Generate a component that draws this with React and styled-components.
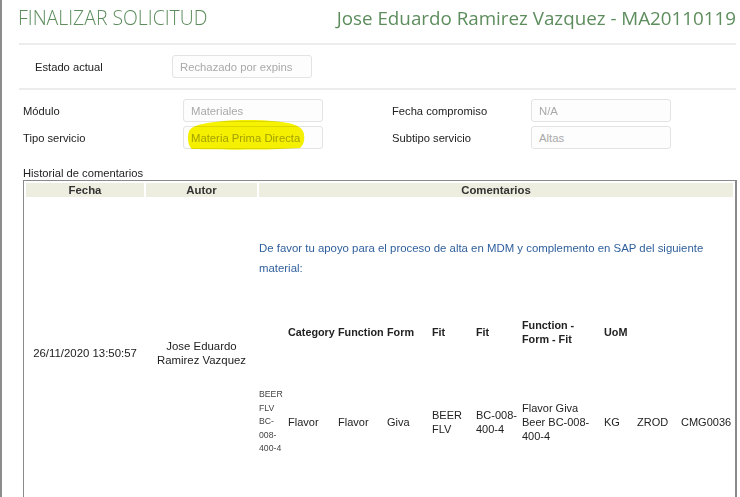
import React from 'react'
import styled, { createGlobalStyle } from 'styled-components'

const GlobalStyle = createGlobalStyle`
    html, body {
        margin : 0;
        padding : 0;
        background : white;
    }
    body {
        border-left : 2px solid #8c8c8c;
        font-family : "Liberation Sans", Arial, sans-serif;
        color : #222;
    }
`;

const Page = styled.div`
    height : 497px;
    overflow : hidden;
    padding : 0 4px 0 15px;
    box-sizing : border-box;
`;

const Header = styled.div`
    display : flex;
    justify-content : space-between;
    align-items : flex-start;
    height : 43px;
    padding-left : 1px;
    box-sizing : border-box;
`;

const Title = styled.h1`
    margin : 5px 0 0;
    font-family : "Open Sans", sans-serif;
    font-weight : ${({light}) => light ? 300 : 400};
    font-size : ${({light}) => light ? '19.4px' : '18.8px'};
    line-height : 26px;
    color : #5d8d5d;
    white-space : nowrap;
`;

const Rule = styled.div`
    border-top : 2px solid #ececec;
    margin-left : 2px;
`;

const StatusRow = styled.div`
    display : flex;
    align-items : center;
    height : 43px;
    padding-left : 18px;
`;

const Label = styled.span`
    font-size : 11.2px;
    color : #222;
    width : ${({w}) => w}px;
    flex-shrink : 0;
`;

const Field = styled.div`
    position : relative;
    width : 140px;
    height : 23px;
    box-sizing : border-box;
    border : 1px solid #e3e3e3;
    border-radius : 3px;
    background : #fdfdfd;
    padding-left : 7px;
    display : flex;
    align-items : center;
    font-size : 11.3px;
    color : #a9a9a9;
`;

const FieldGrid = styled.div`
    display : grid;
    grid-template-columns : 160px 209px 139px 140px;
    grid-auto-rows : 23px;
    row-gap : 4px;
    align-items : center;
    margin-top : 9px;
    padding-left : 6px;
`;

const Highlight = styled.svg`
    position : absolute;
    left : 0;
    top : -8px;
    mix-blend-mode : multiply;
    pointer-events : none;
`;

const SectionTitle = styled.div`
    margin : 17px 0 0 6px;
    font-size : 11.2px;
    line-height : 14px;
    color : #222;
`;

const HistoryTable = styled.table`
    margin-left : 6px;
    width : 714px;
    border-collapse : separate;
    border-spacing : 2px;
    border-top : 1px solid #8a8a8a;
    border-left : 1px solid #8a8a8a;
    border-right : 2px solid #8a8a8a;
    table-layout : fixed;
    font-size : 11.4px;
`;

const HeadCell = styled.th`
    background : #eeeee0;
    height : 14px;
    padding : 0;
    font-size : 11.4px;
    font-weight : bold;
    color : #333;
    text-align : center;
    line-height : 14px;
`;

const BodyCell = styled.td`
    padding : 0;
    vertical-align : ${({top}) => top ? 'top' : 'middle'};
    text-align : ${({center}) => center ? 'center' : 'left'};
    line-height : 14px;
    color : #222;
`;

const CommentText = styled.p`
    margin : 39px 0 0;
    line-height : 20px;
    color : #2f5f9c;
    font-size : 11.4px;
`;

const MaterialTable = styled.table`
    margin : 40px 0 8px;
    border-collapse : collapse;
    table-layout : fixed;
    width : 475px;
`;

const MatHead = styled.th`
    height : 28px;
    padding : 0;
    text-align : left;
    vertical-align : middle;
    font-size : 10.8px;
    font-weight : bold;
    line-height : 14px;
    color : #222;
    white-space : nowrap;
`;

const MatCell = styled.td`
    height : 152px;
    padding : 0;
    text-align : left;
    vertical-align : middle;
    font-size : ${({small}) => small ? '8.7px' : '11px'};
    line-height : ${({small}) => small ? '13.5px' : '14px'};
    color : ${({small}) => small ? '#444' : '#222'};
`;

const columns = [
    {w: 29, head: '', value: ['BEER', 'FLV', 'BC-', '008-', '400-4'], small: true},
    {w: 50, head: 'Category', value: 'Flavor'},
    {w: 49, head: 'Function', value: 'Flavor'},
    {w: 45, head: 'Form', value: 'Giva'},
    {w: 44, head: 'Fit', value: ['BEER', 'FLV']},
    {w: 46, head: 'Fit', value: ['BC-008-', '400-4']},
    {w: 82, head: ['Function -', 'Form - Fit'], value: ['Flavor Giva', 'Beer BC-008-', '400-4']},
    {w: 33, head: 'UoM', value: 'KG'},
    {w: 44, head: '', value: 'ZROD'},
    {w: 53, head: '', value: 'CMG0036'},
]

const lines = (v) => Array.isArray(v)
    ? v.map((l, i) => <React.Fragment key={i}>{i > 0 && <br/>}{l}</React.Fragment>)
    : v

const App = () => {
    return (
        <Page>
            <GlobalStyle/>
            <Header>
                <Title light>FINALIZAR SOLICITUD</Title>
                <Title>Jose Eduardo Ramirez Vazquez - MA20110119</Title>
            </Header>
            <Rule/>
            <StatusRow>
                <Label w={137}>Estado actual</Label>
                <Field>Rechazado por expins</Field>
            </StatusRow>
            <Rule/>

            <FieldGrid>
                <Label>Módulo</Label>
                <Field>Materiales</Field>
                <Label>Fecha compromiso</Label>
                <Field>N/A</Field>
                <Label>Tipo servicio</Label>
                <Field>
                    <Highlight width="125" height="34" viewBox="0 0 125 34">
                        <path d="M5 12 C 8 6, 20 4, 40 2 C 60 0, 85 1, 104 4 C 114 6, 120 10, 120 16 C 121 22, 119 27, 116 29 C 90 31, 40 31, 8 30 C 4 27, 3 18, 5 12 Z" fill="#f7f200"/>
                    </Highlight>
                    Materia Prima Directa
                </Field>
                <Label>Subtipo servicio</Label>
                <Field>Altas</Field>
            </FieldGrid>

            <SectionTitle>Historial de comentarios</SectionTitle>
            <HistoryTable>
                <colgroup>
                    <col style={{width: 118}}/>
                    <col style={{width: 111}}/>
                    <col/>
                </colgroup>
                <thead>
                    <tr>
                        <HeadCell>Fecha</HeadCell>
                        <HeadCell>Autor</HeadCell>
                        <HeadCell>Comentarios</HeadCell>
                    </tr>
                </thead>
                <tbody>
                    <tr>
                        <BodyCell center>26/11/2020 13:50:57</BodyCell>
                        <BodyCell center>Jose Eduardo<br/>Ramirez Vazquez</BodyCell>
                        <BodyCell top>
                            <CommentText>
                                De favor tu apoyo para el proceso de alta en MDM y complemento en SAP del siguiente material:
                            </CommentText>
                            <MaterialTable>
                                <colgroup>
                                    {columns.map((c, i) => <col key={i} style={{width: c.w}}/>)}
                                </colgroup>
                                <thead>
                                    <tr>
                                        {columns.map((c, i) => <MatHead key={i}>{lines(c.head)}</MatHead>)}
                                    </tr>
                                </thead>
                                <tbody>
                                    <tr>
                                        {columns.map((c, i) => <MatCell key={i} small={c.small}>{lines(c.value)}</MatCell>)}
                                    </tr>
                                </tbody>
                            </MaterialTable>
                        </BodyCell>
                    </tr>
                </tbody>
            </HistoryTable>
        </Page>
    )
}

export default App
